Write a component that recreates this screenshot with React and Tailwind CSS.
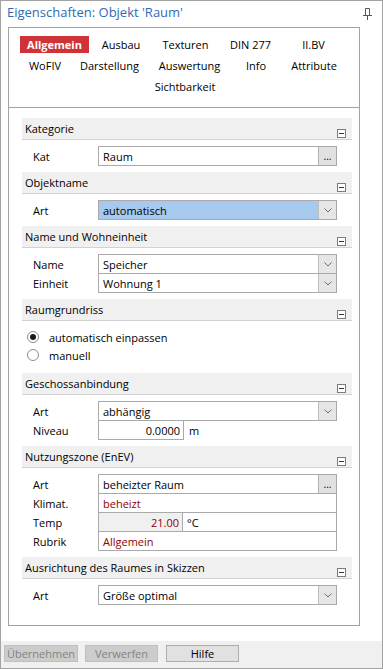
import clsx from "clsx";

const Chevron = () => (
  <svg width="8" height="5" viewBox="0 0 8 5" className="block">
    <path d="M0.5 0.5 L4 4 L7.5 0.5" fill="none" stroke="#6f6f6f" strokeWidth="1" />
  </svg>
);

const Collapse = () => (
  <div className="absolute right-[6px] bottom-[1px] w-[9px] h-[9px] border border-[#7c7c7c] bg-white flex items-center justify-center">
    <div className="w-[5px] h-px bg-[#333]" />
  </div>
);

const Header = ({ title }) => (
  <div className="relative h-[22px] bg-[#f0f0f0] border-b border-[#d2d2d2] flex items-center pl-[3px] text-black">
    {title}
    <Collapse />
  </div>
);

const Field = ({ children, className, button, right, red, w = "w-[239px]" }) => (
  <div className={clsx("h-[20px] border border-[#a9a9a9] flex items-stretch", w, className)}>
    <div
      className={clsx(
        "flex-1 flex items-center pl-[4px] overflow-hidden whitespace-nowrap",
        right && "justify-end pr-[3px]",
        red && "text-[#8f0000]"
      )}
    >
      {children}
    </div>
    {button === "drop" && (
      <div className="w-[18px] bg-[#e6e6e6] border-l border-[#bdbdbd] flex items-center justify-center">
        <Chevron />
      </div>
    )}
    {button === "dots" && (
      <div className="w-[18px] bg-[#e1e1e1] border-l border-[#b4b4b4] flex items-end justify-center pb-[4px] text-[10px] leading-none">
        ...
      </div>
    )}
  </div>
);

const Row = ({ label, children, className }) => (
  <div className={clsx("flex items-center pl-[11px]", className)}>
    <div className="w-[65px]">{label}</div>
    {children}
  </div>
);

const Section = ({ title, children }) => (
  <div>
    <Header title={title} />
    <div className="pt-[6px] pb-[6px]">{children}</div>
  </div>
);

const Tab = ({ w, active, children }) => (
  <div className={clsx("flex justify-center", w)}>
    {active ? (
      <div className="w-full h-[17px] bg-[#d03337] text-white font-bold flex items-center justify-center">
        {children}
      </div>
    ) : (
      <span>{children}</span>
    )}
  </div>
);

const Radio = ({ checked, label }) => (
  <div className="h-[18px] flex items-center pl-[5px] gap-[10px]">
    <div className="w-[12px] h-[12px] rounded-full border border-[#8c8c8c] bg-white flex items-center justify-center">
      {checked && <div className="w-[6px] h-[6px] rounded-full bg-[#1a1a1a]" />}
    </div>
    <span>{label}</span>
  </div>
);

export default function App() {
  return (
    <div className="w-[383px] h-[669px] border border-[#a3a3a3] bg-white flex flex-col font-['Open_Sans',_'Noto_Sans',_sans-serif] text-[11px] text-black leading-none">
      <div className="h-[26px] flex items-start justify-between pl-[6px] pr-[10px] pt-[5px]">
        <span className="text-[13px] text-[#2f6bb5]">Eigenschaften: Objekt 'Raum'</span>
        <svg width="9" height="12" viewBox="0 0 9 12" className="mt-[2px]">
          <path d="M2.5 0.5 H6.5 V7.5 H2.5 Z" fill="none" stroke="#555" />
          <path d="M0 7.5 H9" stroke="#555" />
          <path d="M4.5 8 V12" stroke="#555" />
        </svg>
      </div>

      <div className="ml-[7px] w-[352px] h-[599px] border border-[#a3a3a3] flex flex-col">
        <div className="pt-[6px] pb-[10px] border-b border-[#a3a3a3]">
          <div className="flex h-[21px] items-center ml-[11px]">
            <Tab w="w-[69px]" active>Allgemein</Tab>
            <Tab w="w-[64px]">Ausbau</Tab>
            <Tab w="w-[65px]">Texturen</Tab>
            <Tab w="w-[65px]">DIN 277</Tab>
            <Tab w="w-[61px]">II.BV</Tab>
          </div>
          <div className="flex h-[21px] items-center ml-[11px]">
            <Tab w="w-[50px]">WoFIV</Tab>
            <Tab w="w-[79px]">Darstellung</Tab>
            <Tab w="w-[81px]">Auswertung</Tab>
            <Tab w="w-[52px]">Info</Tab>
            <Tab w="w-[64px]">Attribute</Tab>
          </div>
          <div className="flex h-[21px] items-center justify-center ml-[11px] w-[330px]">
            <span>Sichtbarkeit</span>
          </div>
        </div>

        <div className="ml-[13px] w-[330px] pt-[10px]">
          <Section title="Kategorie">
            <Row label="Kat">
              <Field button="dots">Raum</Field>
            </Row>
          </Section>

          <Section title="Objektname">
            <Row label="Art">
              <Field button="drop" className="bg-[#a7c9ee]">automatisch</Field>
            </Row>
          </Section>

          <Section title="Name und Wohneinheit">
            <Row label="Name">
              <Field button="drop">Speicher</Field>
            </Row>
            <Row label="Einheit" className="-mt-px">
              <Field button="drop">Wohnung 1</Field>
            </Row>
          </Section>

          <div>
            <Header title="Raumgrundriss" />
            <div className="pt-[7px] pb-[9px]">
              <Radio checked label="automatisch einpassen" />
              <Radio label="manuell" />
            </div>
          </div>

          <Section title="Geschossanbindung">
            <Row label="Art">
              <Field button="drop">abhängig</Field>
            </Row>
            <Row label="Niveau" className="-mt-px">
              <Field right w="w-[86px]">0.0000</Field>
              <span className="ml-[5px]">m</span>
            </Row>
          </Section>

          <Section title="Nutzungszone (EnEV)">
            <Row label="Art">
              <Field button="dots">beheizter Raum</Field>
            </Row>
            <Row label="Klimat." className="-mt-px">
              <Field red>beheizt</Field>
            </Row>
            <Row label="Temp" className="-mt-px">
              <div className="h-[20px] w-[239px] border border-[#a9a9a9] flex">
                <div className="w-[84px] bg-[#f0f0f0] border-r border-[#a9a9a9] flex items-center justify-end pr-[3px] text-[#8f0000]">
                  21.00
                </div>
                <div className="flex-1 flex items-center pl-[4px]">°C</div>
              </div>
            </Row>
            <Row label="Rubrik" className="-mt-px">
              <Field red>Allgemein</Field>
            </Row>
          </Section>

          <Section title="Ausrichtung des Raumes in Skizzen">
            <Row label="Art">
              <Field button="drop">Größe optimal</Field>
            </Row>
          </Section>
        </div>
      </div>

      <div className="h-[15px]" />
      <div className="flex-1 bg-[#f0f0f0] flex items-start gap-[7px] pl-[3px] pt-[4px]">
        <button className="w-[74px] h-[17px] bg-[#cccccc] border border-[#bfbfbf] text-[#838383] flex items-center justify-center">
          Übernehmen
        </button>
        <button className="w-[73px] h-[17px] bg-[#cccccc] border border-[#bfbfbf] text-[#838383] flex items-center justify-center">
          Verwerfen
        </button>
        <button className="ml-[1px] w-[73px] h-[17px] bg-[#e1e1e1] border border-[#adadad] text-black flex items-center justify-center">
          Hilfe
        </button>
      </div>
    </div>
  );
}
